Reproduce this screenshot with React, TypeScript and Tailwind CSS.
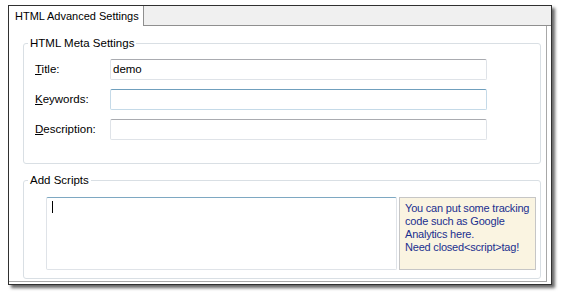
const font = { fontFamily: '"Liberation Sans", Arial, sans-serif' };

function Field({ label, mnemonic, value, focused }: { label: string; mnemonic: string; value?: string; focused?: boolean }) {
  return (
    <div className="flex items-center h-[21px]">
      <span className="w-[75px] text-[11.5px] text-black">
        <u>{mnemonic}</u>
        {label}
      </span>
      <div
        className={
          'w-[377px] h-[21px] rounded-[2px] border px-[2px] text-[11.5px] leading-[19px] bg-white ' +
          (focused
            ? 'border-[#c5dae8] border-t-[#6f9fbd]'
            : 'border-[#dfe3e8] border-t-[#a9abb0]')
        }
      >
        {value}
      </div>
    </div>
  );
}

export default function App() {
  return (
    <div className="w-[566px] h-[302px] bg-white pt-[5px] pl-[8px]" style={font}>
      <div className="w-[544px] h-[280px] border border-[#303030] bg-white shadow-[3px_3px_3px_rgba(0,0,0,0.6)] flex flex-col">
        <div className="flex h-[20px]">
          <div className="w-[135px] border-r border-[#8f8f8f] bg-white pl-[6px] text-[11px] leading-[20px] text-black whitespace-nowrap">
            HTML Advanced Settings
          </div>
          <div className="flex-1 bg-[#f0f0f0] border-b border-[#8f8f8f]" />
        </div>
        <div className="mr-[4px] h-[256px] border-r border-b border-[#a8a8a8] pt-[10px] pl-[14px]">
          <fieldset className="w-[518px] h-[128px] rounded-[3px] border border-[#d9dfe4]">
            <legend className="ml-[4px] px-[2px] text-[11.5px] leading-[14px] text-black">HTML Meta Settings</legend>
            <div className="mt-[9px] pl-[11px] flex flex-col gap-[9px]">
              <Field mnemonic="T" label="itle:" value="demo" />
              <Field mnemonic="K" label="eywords:" focused />
              <Field mnemonic="D" label="escription:" />
            </div>
          </fieldset>
          <fieldset className="mt-[9px] w-[518px] rounded-[3px] border border-[#d9dfe4] pb-[8px]">
            <legend className="ml-[4px] px-[2px] text-[11.5px] leading-[14px] text-black">Add Scripts</legend>
            <div className="mt-[10px] pl-[22px] flex gap-[2px]">
              <div className="w-[351px] h-[73px] rounded-[2px] border border-[#dfe3e8] border-t-[#7ea8c2] bg-white pl-[5px] pt-[3px]">
                <div className="w-[1px] h-[12px] bg-black" />
              </div>
              <div className="w-[137px] h-[73px] border border-[#c6c6c6] bg-[#faf4e1] pl-[5px] pr-[1px] pt-[4px] text-[11px] leading-[13px] tracking-[-0.2px] text-[#1a2f8f]">
                You can put some tracking code such as Google Analytics here.
                <br />
                Need closed&lt;script&gt;tag!
              </div>
            </div>
          </fieldset>
        </div>
      </div>
    </div>
  );
}
